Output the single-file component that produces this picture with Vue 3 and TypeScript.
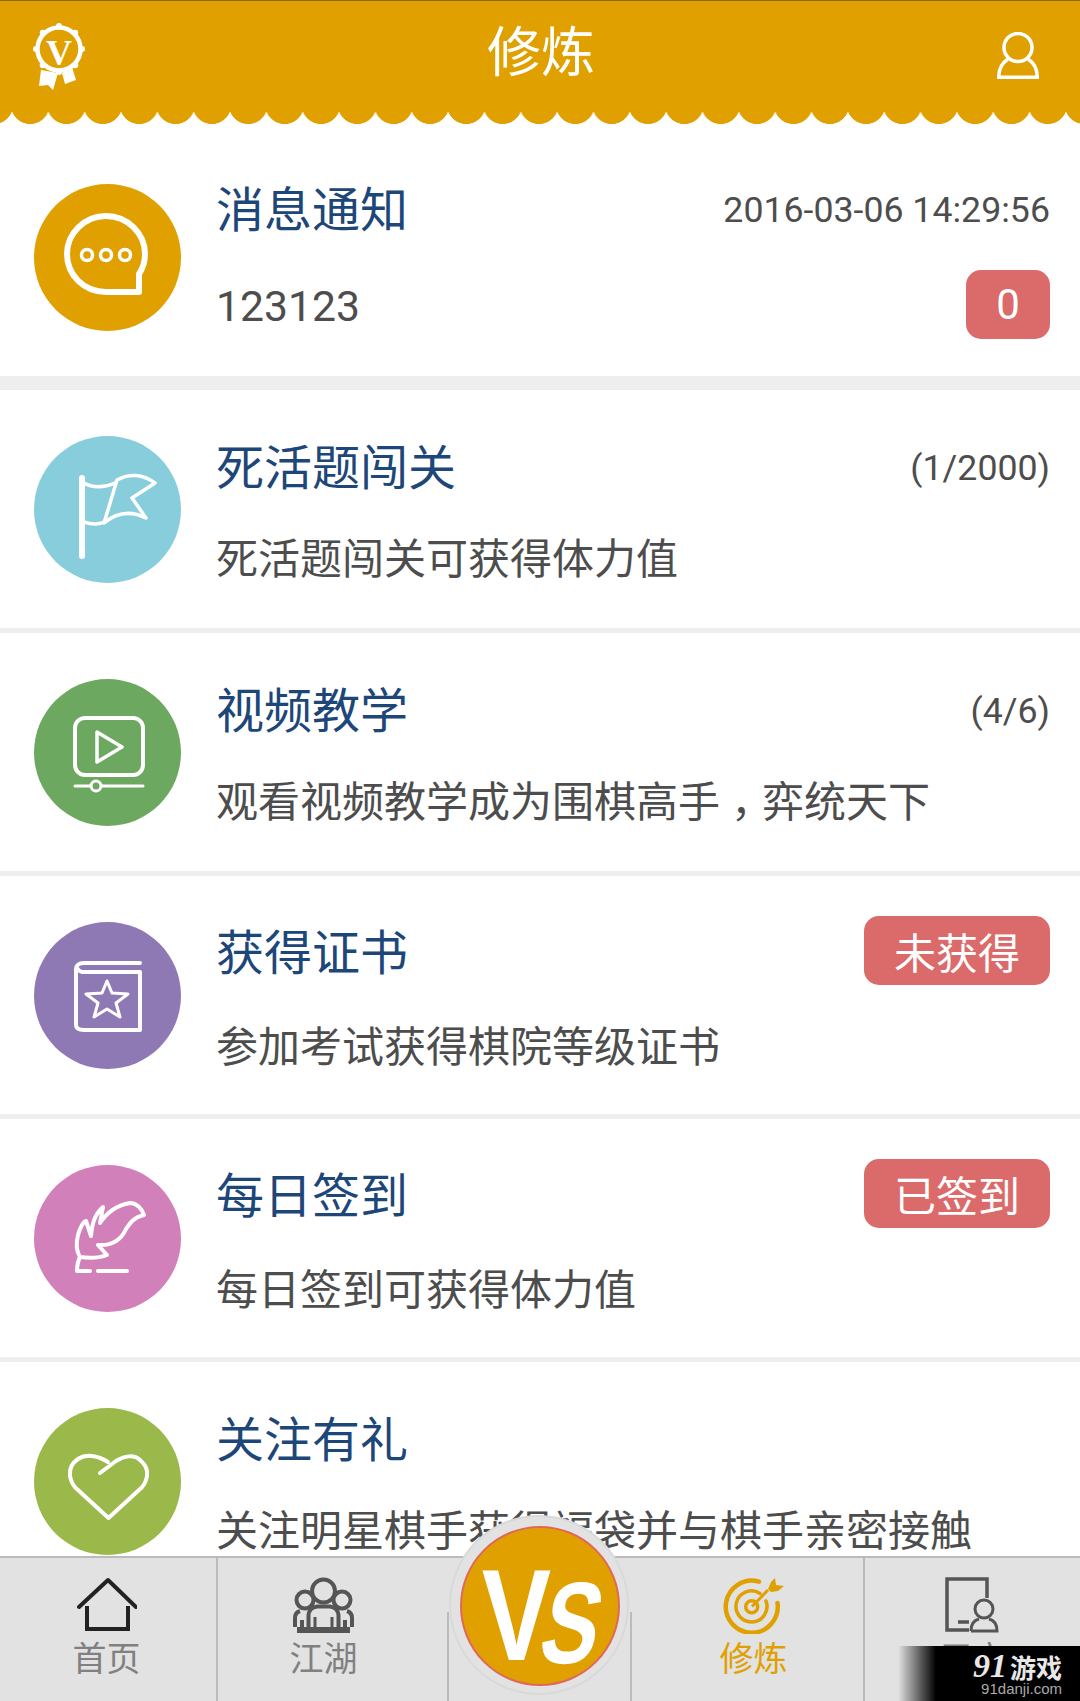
<script setup lang="ts">
interface Row {
  icon: string;
  color: string;
  title: string;
  desc: string;
  meta?: string;
  badge?: string;
}

const rows: Row[] = [
  { icon: "flag", color: "#88cddc", title: "死活题闯关", desc: "死活题闯关可获得体力值", meta: "(1/2000)" },
  { icon: "video", color: "#6da860", title: "视频教学", desc: "观看视频教学成为围棋高手，弈统天下", meta: "(4/6)" },
  { icon: "book", color: "#8f79b5", title: "获得证书", desc: "参加考试获得棋院等级证书", badge: "未获得" },
  { icon: "feather", color: "#d280ba", title: "每日签到", desc: "每日签到可获得体力值", badge: "已签到" },
  { icon: "heart", color: "#9bb84b", title: "关注有礼", desc: "关注明星棋手获得福袋并与棋手亲密接触" },
];

const medalDots = Array.from({ length: 8 }, (_, i) => {
  const a = (i * Math.PI) / 4 - Math.PI / 2;
  return { x: 26 + 23 * Math.cos(a), y: 26 + 23 * Math.sin(a) };
});
</script>

<template>
  <div class="page">
    <header class="header">
      <svg class="header__medal" viewBox="0 0 52 67" width="52" height="67" aria-hidden="true">
        <circle cx="26" cy="26" r="21.500" fill="none" stroke="#fff" stroke-width="4.500" />
        <circle v-for="(d, i) in medalDots" :key="i" :cx="d.x" :cy="d.y" r="3" fill="#fff" />
        <text x="26" y="42" text-anchor="middle" class="header__medal-v">V</text>
        <path d="M8 47 L6 63 L15 62 L20 67 L25 50 Z" fill="#fff" />
        <path d="M29 50 L32 61 L43 57 L39 44 Z" fill="#fff" />
      </svg>
      <h1 class="header__title">修炼</h1>
      <svg class="header__user" viewBox="0 0 42 47" width="42" height="47" aria-hidden="true">
        <circle cx="21" cy="15.500" r="14" fill="none" stroke="#fff" stroke-width="3.500" />
        <path d="M11 27 C5 31 1.700 37 1.700 45.300 H40.300 C40.300 37 37 31 31 27" fill="none" stroke="#fff" stroke-width="3.500" />
      </svg>
    </header>
    <div class="scallop"></div>

    <main class="list">
      <section class="row row--first">
        <div class="row__icon" style="background: #dfa000">
          <svg viewBox="0 0 147 147" width="147" height="147" fill="none" stroke="#fff" stroke-width="6" aria-hidden="true">
            <path d="M105 108 V90 C109 84 111 78 111 70 C111 49 93 32 72 32 C51 32 33 49 33 70 C33 91 50 108 72 108 Z" stroke-linejoin="round" />
            <circle cx="53" cy="71" r="5.500" stroke-width="3.500" />
            <circle cx="72" cy="71" r="5.500" stroke-width="3.500" />
            <circle cx="91" cy="71" r="5.500" stroke-width="3.500" />
          </svg>
        </div>
        <div class="row__body">
          <div class="row__line">
            <span class="row__title">消息通知</span>
            <span class="row__meta row__meta--time">2016-03-06 14:29:56</span>
          </div>
          <div class="row__line row__line--second">
            <span class="row__desc row__desc--num">123123</span>
            <span class="badge badge--count">0</span>
          </div>
        </div>
      </section>

      <section v-for="row in rows" :key="row.title" class="row" :class="{ 'row--badge': row.badge }">
        <div class="row__icon" :style="{ background: row.color }">
          <svg viewBox="0 0 147 147" width="147" height="147" fill="none" stroke="#fff" stroke-linecap="round" stroke-linejoin="round" aria-hidden="true">
            <g v-if="row.icon === 'flag'" stroke-width="3.500">
              <path d="M48 42 V120" stroke-width="6" />
              <path d="M50 47 C58 52 70 52 81 47" />
              <path d="M50 86 C56 88 64 89 70 86" />
              <path d="M83 44 L70 87 C82 77 96 74 112 82 L98 62 L121 47 C109 38 95 37 83 44 Z" />
            </g>
            <g v-else-if="row.icon === 'video'">
              <rect x="41" y="39" width="68" height="57" rx="10" stroke-width="4" />
              <path d="M63 53 L88 68 L63 83 Z" stroke-width="3.500" />
              <path d="M41 107 H57 M68 107 H109" stroke-width="3" />
              <circle cx="62" cy="107" r="5" stroke-width="3" />
            </g>
            <g v-else-if="row.icon === 'book'">
              <path d="M106 41 H50 C44 41 42 44 42 47 V103 C42 107 45 108 50 108 H106 V50 H48 C46 50 45 49 43 46" stroke-width="4" />
              <path d="M73 59 L78 71 L94 72 L82 81 L86 95 L73 87 L60 95 L64 81 L52 72 L68 71 Z" stroke-width="3" />
            </g>
            <g v-else-if="row.icon === 'feather'" stroke-width="4">
              <path d="M46 92 C41 84 43 74 44 70 C46 62 50 56 52 56 L57 71 C58 60 60 50 69 42 L66 58 C74 46 84 40 96 38 C103 38 108 44 110 50 C100 52 96 58 92 64 C87 75 78 81 64 80 L73 90 C63 94 54 93 46 92 Z" />
              <path d="M46 92 C44 96 43 100 43 106 H56" />
              <path d="M64 106 H93" />
            </g>
            <g v-else stroke-width="4">
              <path d="M66 65 L82 53 C90 48 100 46 106 52 C112 57 114 62 113 68 C112 74 109 79 105 82 L74.500 110 L44 82 C40 79 37 74 36 68 C35 60 38 55 44 51 C52 46 63 47 74 54" />
            </g>
          </svg>
        </div>
        <div class="row__body">
          <div class="row__line">
            <span class="row__title">{{ row.title }}</span>
            <span v-if="row.meta" class="row__meta">{{ row.meta }}</span>
            <span v-if="row.badge" class="badge">{{ row.badge }}</span>
          </div>
          <div class="row__line row__line--desc">
            <span class="row__desc">
              <template v-for="(part, i) in row.desc.split('，')" :key="i"><span v-if="i > 0" class="row__comma">，</span>{{ part }}</template>
            </span>
          </div>
        </div>
      </section>
    </main>

    <nav class="tabs">
      <a class="tab tab--home">
        <div class="tab__icon">
          <svg viewBox="0 0 60 54" width="60" height="54" fill="none" stroke="#222" stroke-width="4" aria-hidden="true">
            <path d="M2 30 L31 3 L59 30" stroke-linecap="round" stroke-linejoin="round" />
            <path d="M10 29 V52 H51 V29" />
          </svg>
        </div>
        <span class="tab__label">首页</span>
      </a>
      <a class="tab tab--line tab--left">
        <div class="tab__icon">
          <svg viewBox="0 0 62 56" width="62" height="56" fill="none" stroke="#555" stroke-width="4" aria-hidden="true">
            <circle cx="30.500" cy="14" r="11.500" />
            <circle cx="12" cy="23" r="8.500" />
            <circle cx="49" cy="23" r="8.500" />
            <path d="M15.500 53 V38 C16 33 20 30 24 29.500 H37 C41 30 45 33 45.500 38 V53" />
            <path d="M22 40 V50 M39 40 V50" stroke-width="3" />
            <path d="M2 50 V41 C2 37 4 35 7 34 M59 50 V41 C59 37 57 35 54 34 M9 43 V52 M52 43 V52" />
            <path d="M4 53 H57" stroke-width="6" />
          </svg>
        </div>
        <span class="tab__label">江湖</span>
      </a>
      <div class="tabs__center"></div>
      <a class="tab tab--active">
        <div class="tab__icon">
          <svg viewBox="0 0 63 57" width="63" height="57" fill="none" stroke="#dfa000" stroke-width="4.500" aria-hidden="true">
            <path d="M37 4.700 A26 26 0 1 0 55.500 26" stroke-linecap="round" />
            <path d="M38 16.500 A15.500 15.500 0 1 0 44 24" stroke-width="3.500" stroke-linecap="round" />
            <circle cx="29.700" cy="29.700" r="6" stroke-width="3.500" />
            <path d="M30 29.500 L46 13" stroke-width="3" />
            <path d="M46 12 L49 5 L53 1 L54 8 L62 9 L56 14 L49 15 Z" fill="#dfa000" stroke="none" />
          </svg>
        </div>
        <span class="tab__label">修炼</span>
      </a>
      <a class="tab tab--line">
        <div class="tab__icon">
          <svg viewBox="0 0 56 56" width="56" height="56" fill="none" stroke="#555" stroke-width="3.500" aria-hidden="true">
            <path d="M42 21 V2 H2 V53 H24 M13 45 H24" />
            <circle cx="39" cy="32" r="9" stroke-width="3" />
            <path d="M26 54 C26 46 30 43 34 42 M44 42 C48 43 52 46 52 54 H26" stroke-width="3" />
          </svg>
        </div>
        <span class="tab__label">用户</span>
      </a>

      <div class="vs">
        <div class="vs__disc">
          <span class="vs__v">V</span>
          <span class="vs__s">S</span>
        </div>
      </div>
    </nav>

    <div class="mark">
      <div class="mark__logo"><span class="mark__num">91</span><span class="mark__name">游戏</span></div>
      <div class="mark__url">91danji.com</div>
    </div>
  </div>
</template>

<style>
html,
body {
  margin: 0;
  background: #fff;
}
</style>

<style scoped>
.page {
  position: relative;
  display: flex;
  flex-direction: column;
  width: 1080px;
  height: 1701px;
  overflow: hidden;
  font-family: Roboto, "Noto Sans CJK SC", sans-serif;
  color: #4d4d4d;
  background: #fff;
}

.header {
  display: flex;
  flex: none;
  align-items: center;
  height: 110px;
  padding: 0 41px 0 33px;
  background: #dfa000;
  border-top: 1px solid #8a6a12;
}

.header__medal {
  flex: none;
}

.header__medal-v {
  font-family: "Liberation Serif", serif;
  font-size: 36px;
  font-weight: 700;
  fill: #fff;
}

.header__title {
  flex: 1;
  margin: 0 0 5px;
  font-size: 54px;
  font-weight: 400;
  line-height: 70px;
  text-align: center;
  color: #fff;
}

.header__user {
  flex: none;
  margin-bottom: 2px;
}

.scallop {
  flex: none;
  height: 13px;
  background-color: #fff;
  background-image: radial-gradient(circle 19.6px at 50% -6.3px, #dfa000 19px, rgba(223, 160, 0, 0) 19.6px);
  background-size: 36.35px 13px;
  background-position: 12px 0;
  background-repeat: repeat-x;
}

.list {
  display: flex;
  flex: 1;
  flex-direction: column;
  gap: 5px;
  min-height: 0;
  overflow: hidden;
  background: #eee;
}

.row {
  display: flex;
  flex: none;
  align-items: center;
  box-sizing: border-box;
  height: 238px;
  padding: 40px 30px 40px 34px;
  background: #fff;
}

.row--first {
  height: 252px;
  margin-bottom: 9px;
  padding: 50px 30px 36px 34px;
}

.row__icon {
  flex: none;
  width: 147px;
  height: 147px;
  margin-right: 35px;
  border-radius: 50%;
}

.row__icon svg {
  display: block;
}

.row__body {
  flex: 1;
  min-width: 0;
  margin-top: -1px;
}

.row--first .row__body {
  margin-top: -2px;
}

.row__line {
  display: flex;
  align-items: center;
  justify-content: space-between;
  height: 69px;
}

.row__line--second {
  margin-top: 28px;
}

.row__line--desc {
  height: 60px;
  margin-top: 25px;
}

.row--badge .row__line--desc {
  margin-top: 28px;
}

.row__title {
  padding-bottom: 4px;
  font-size: 48px;
  color: #1d4679;
}

.row__meta {
  padding-top: 3px;
  font-size: 35.7px;
  color: #4d4d4d;
}

.row__meta--time {
  padding-top: 5px;
}

.row__desc {
  font-size: 42px;
  white-space: nowrap;
}

.row__desc--num {
  padding-top: 3px;
  font-size: 42.7px;
}

.row__comma {
  display: inline-block;
  font-family: "Noto Sans CJK TC", sans-serif;
  transform: translateY(12px);
}

.badge {
  display: flex;
  align-items: center;
  justify-content: center;
  box-sizing: border-box;
  height: 69px;
  padding: 0 30px;
  border-radius: 15px;
  font-size: 42px;
  color: #fff;
  background: #db6b6b;
}

.badge--count {
  width: 84px;
  padding: 0;
}

.tabs {
  position: relative;
  display: grid;
  flex: none;
  grid-template-columns: 216px 233px 183px 231px 217px;
  height: 143px;
  background: #e2e2e2;
  border-top: 2px solid #bbb;
}

.tab {
  display: flex;
  flex-direction: column;
  align-items: center;
  box-sizing: border-box;
  padding-top: 19px;
  color: #808080;
}

.tab__icon {
  flex: none;
  height: 58px;
}

.tab svg {
  display: block;
}

.tab--line {
  border-left: 2px solid #bbb;
}

.tab--home {
  padding-right: 3px;
}

.tab--left {
  padding-right: 20px;
}

.tab--active {
  padding-left: 12px;
  color: #dfa000;
}

.tab__label {
  font-size: 34px;
  line-height: 48px;
}

.tabs__center {
  margin: 54px 0 0 -2px;
  border-left: 2px solid #bbb;
  border-right: 2px solid #bbb;
}

.vs {
  position: absolute;
  top: -43px;
  left: 449px;
  box-sizing: border-box;
  width: 180px;
  height: 180px;
  padding: 9px 7px 7px 9px;
  border: 2px solid #d9d9d9;
  border-radius: 50%;
  background: #e2e2e2;
}

.vs__disc {
  display: flex;
  align-items: center;
  justify-content: center;
  box-sizing: border-box;
  width: 160px;
  height: 160px;
  border: 2px solid #e0685a;
  border-radius: 50%;
  font-family: "Liberation Sans", sans-serif;
  font-weight: 700;
  color: #fff;
  background: #dfa000;
}

.vs__v {
  font-size: 130px;
  line-height: 130px;
  transform: translate(15px, 9px) scaleX(0.8);
}

.vs__s {
  font-size: 116px;
  line-height: 116px;
  transform: translate(-11px, 17px) skewX(-12deg) scaleX(0.74);
}

.mark {
  position: absolute;
  right: 0;
  bottom: 0;
  display: flex;
  flex-direction: column;
  align-items: flex-end;
  box-sizing: border-box;
  width: 182px;
  height: 55px;
  padding: 5px 18px 0 0;
  background: linear-gradient(to right, rgba(0, 0, 0, 0), #000 38px);
}

.mark__logo {
  display: flex;
  align-items: center;
  height: 30px;
  color: #e8e8e8;
}

.mark__num {
  margin-right: 3px;
  font-family: "Liberation Serif", serif;
  font-size: 34px;
  font-style: italic;
  font-weight: 700;
}

.mark__name {
  font-size: 26px;
  font-weight: 700;
}

.mark__url {
  font-family: "Liberation Sans", sans-serif;
  font-size: 15px;
  line-height: 16px;
  color: #aaa;
}
</style>
